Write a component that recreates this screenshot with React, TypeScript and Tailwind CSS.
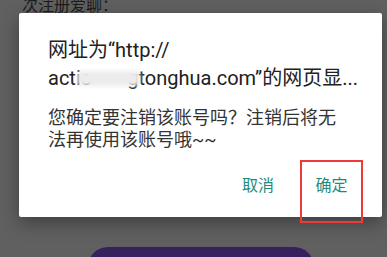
export default function App() {
  return (
    <div
      className="relative h-[257px] w-[387px] overflow-hidden bg-[#606060]"
      style={{ fontFamily: "Roboto, 'Noto Sans CJK SC', sans-serif" }}
    >
      {/* page underneath the dialog */}
      <div className="flex h-full flex-col">
        <p className="ml-[22px] mt-[-5px] text-[16px] leading-[22px] text-[#1c1c1c]">次注册爱聊：</p>
        <div className="mt-auto ml-[88px] mb-[-30px] h-[40px] w-[226px] rounded-[22px] bg-[#36205e]" />
      </div>

      {/* alert dialog */}
      <div className="absolute left-[19px] top-[13px] w-[363px] rounded-[2px] bg-white pt-[23px] shadow-[0_6px_18px_rgba(0,0,0,0.35)]">
        <div className="px-[29px] text-[20px] leading-[28px] text-[#212121]">
          <div>网址为“http://</div>
          <div className="whitespace-nowrap">
            acti
            <span className="relative">
              c<span className="inline-block w-[36px]" />g
              <span className="absolute left-[-4px] right-[-2px] top-[5px] h-[15px] rounded bg-[#ececec] blur-[2px]" />
            </span>
            tonghua.com”的网页显...
          </div>
        </div>
        <div className="mt-[15px] px-[29px] text-[18px] leading-[22px] text-[#333333]">
          <div>您确定要注销该账号吗？注销后将无</div>
          <div>法再使用该账号哦~~</div>
        </div>
        <div className="mt-[9px] mb-[-6px] flex items-start justify-end pr-[19px] text-[16px] leading-[20px] text-[#1f8a7e]">
          <button className="mr-[26px] mt-[16px]">取消</button>
          <button className="flex h-[63px] w-[63px] justify-center border-2 border-[#f03a3a] pt-[14px]">确定</button>
        </div>
      </div>
    </div>
  )
}
